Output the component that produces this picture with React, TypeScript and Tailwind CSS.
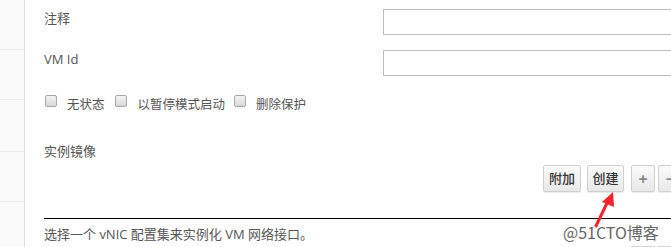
import React from "react";

const font = '"Open Sans", "Noto Sans CJK SC", sans-serif';

function Checkbox() {
  return (
    <span className="block w-[12px] h-[12px] rounded-[2px] border border-[#a9a9a9] bg-gradient-to-b from-[#f4f4f4] to-[#d8d8d8] shrink-0" />
  );
}

function Btn({ children, w }: { children: React.ReactNode; w: string }) {
  return (
    <div
      className={`${w} h-[27px] shrink-0 flex items-center justify-center border border-[#cfcfcf] rounded-[2px] bg-gradient-to-b from-[#fbfbfb] to-[#e8e8e8] text-[13px] text-[#333] font-medium shadow-[0_1px_1px_rgba(0,0,0,0.08)]`}
    >
      {children}
    </div>
  );
}

export default function App() {
  return (
    <div
      className="relative w-[671px] h-[247px] overflow-hidden bg-white flex"
      style={{ fontFamily: font }}
    >
      <div className="w-[25px] shrink-0 bg-[#fafafa] border-r border-[#e2e2e2] flex flex-col">
        <div className="h-[50px] border-b border-[#ececec]" />
        <div className="h-[50px] border-b border-[#ececec]" />
        <div className="h-[52px] border-b border-[#ececec]" />
        <div className="h-[50px] border-b border-[#ececec]" />
      </div>
      <div className="flex-1 min-w-0 pl-[19px] pt-[9px] text-[#555] text-[13px]">
        <div className="h-[26px] flex items-center">
          <div className="w-[339px] shrink-0 -mt-[6px]">注释</div>
          <div className="w-[320px] shrink-0 h-[26px] border border-[#bdbdbd] bg-white" />
        </div>
        <div className="mt-[15px] h-[26px] flex items-center">
          <div className="w-[339px] shrink-0 -mt-[6px]">VM Id</div>
          <div className="w-[320px] shrink-0 h-[26px] border border-[#bdbdbd] bg-white" />
        </div>
        <div className="mt-[15px] h-[24px] flex items-start text-[12.5px]">
          <span className="ml-[1px] mt-[4px]"><Checkbox /></span>
          <span className="ml-[10px] mt-[4px] leading-[20px]">无状态</span>
          <span className="ml-[10px] mt-[4px]"><Checkbox /></span>
          <span className="ml-[11px] mt-[4px] leading-[20px]">以暂停模式启动</span>
          <span className="ml-[9px] mt-[4px]"><Checkbox /></span>
          <span className="ml-[10px] mt-[4px] leading-[20px]">删除保护</span>
        </div>
        <div className="mt-[27px] h-[20px] flex items-center">实例镜像</div>
        <div className="mt-[3px] h-[27px] flex justify-end -mr-[11px]">
          <Btn w="w-[38px]">附加</Btn>
          <div className="w-[6px]" />
          <Btn w="w-[37px]">创建</Btn>
          <div className="w-[7px]" />
          <Btn w="w-[24px]">
            <span className="text-[#888] text-[16px] font-bold leading-none">+</span>
          </Btn>
          <div className="w-[3px]" />
          <Btn w="w-[24px]">
            <span className="text-[#888] text-[16px] font-bold leading-none">−</span>
          </Btn>
        </div>
        <div className="mt-[26px] border-t border-black" />
        <div className="mt-[6px] h-[20px] flex items-center">
          选择一个 vNIC 配置集来实例化 VM 网络接口。
        </div>
        <div className="flex justify-end -mr-[11px] gap-[3px] mt-[1px]">
          <div className="w-[24px] h-[20px] border border-[#d5d5d5]" />
          <div className="w-[24px] h-[20px] border border-[#d5d5d5]" />
        </div>
      </div>

      <svg
        className="absolute left-0 top-0 pointer-events-none"
        width="671"
        height="247"
        viewBox="0 0 671 247"
      >
        <line x1="596" y1="226" x2="608" y2="201" stroke="#f2262a" strokeWidth="3" strokeLinecap="round" />
        <polygon points="613,192 614,207 602,202" fill="#f2262a" />
      </svg>
      <div
        className="absolute left-[563px] top-[221px] text-[16px] text-[#666] whitespace-nowrap leading-[22px]"
        style={{
          fontFamily: '"Noto Sans CJK SC", sans-serif',
          textShadow:
            "1px 0 0 #fff, -1px 0 0 #fff, 0 1px 0 #fff, 0 -1px 0 #fff, 1px 1px 0 #fff, -1px -1px 0 #fff, 1px -1px 0 #fff, -1px 1px 0 #fff",
        }}
      >
        @51CTO博客
      </div>
    </div>
  );
}
